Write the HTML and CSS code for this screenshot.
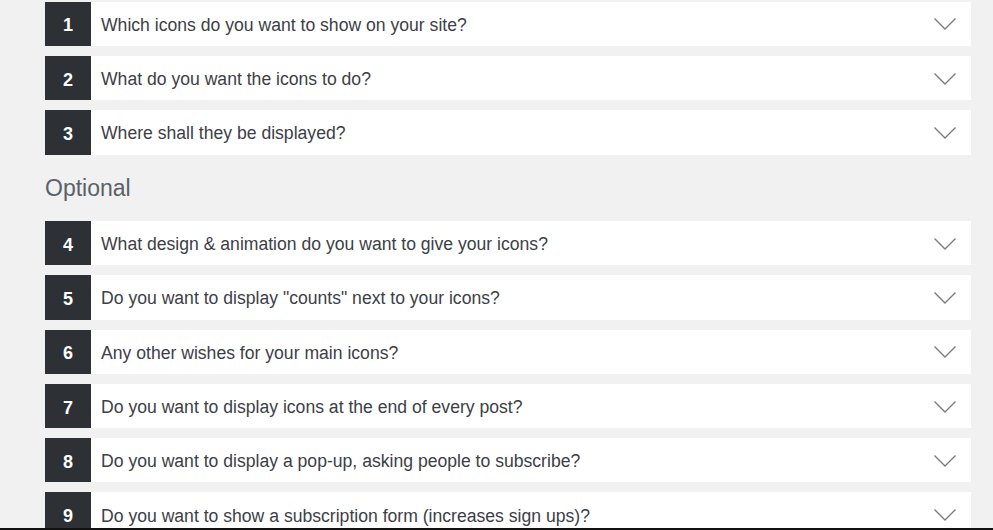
FILE: index.html
```html
<!DOCTYPE html>
<html lang="en">
<head>
<meta charset="utf-8">
<title>Icon setup</title>
<link rel="stylesheet" href="styles.css">
</head>
<body>
<div class="page">
  <div class="list">
    <div class="item"><div class="num">1</div><div class="q">Which icons do you want to show on your site?</div><svg class="chev" viewBox="0 0 22 12"><path d="M0.5 0.5 L11 11 L21.5 0.5"/></svg></div>
    <div class="item"><div class="num">2</div><div class="q">What do you want the icons to do?</div><svg class="chev" viewBox="0 0 22 12"><path d="M0.5 0.5 L11 11 L21.5 0.5"/></svg></div>
    <div class="item"><div class="num">3</div><div class="q">Where shall they be displayed?</div><svg class="chev" viewBox="0 0 22 12"><path d="M0.5 0.5 L11 11 L21.5 0.5"/></svg></div>
  </div>
  <h2 class="section">Optional</h2>
  <div class="list">
    <div class="item"><div class="num">4</div><div class="q">What design &amp; animation do you want to give your icons?</div><svg class="chev" viewBox="0 0 22 12"><path d="M0.5 0.5 L11 11 L21.5 0.5"/></svg></div>
    <div class="item"><div class="num">5</div><div class="q">Do you want to display "counts" next to your icons?</div><svg class="chev" viewBox="0 0 22 12"><path d="M0.5 0.5 L11 11 L21.5 0.5"/></svg></div>
    <div class="item"><div class="num">6</div><div class="q">Any other wishes for your main icons?</div><svg class="chev" viewBox="0 0 22 12"><path d="M0.5 0.5 L11 11 L21.5 0.5"/></svg></div>
    <div class="item"><div class="num">7</div><div class="q">Do you want to display icons at the end of every post?</div><svg class="chev" viewBox="0 0 22 12"><path d="M0.5 0.5 L11 11 L21.5 0.5"/></svg></div>
    <div class="item"><div class="num">8</div><div class="q">Do you want to display a pop-up, asking people to subscribe?</div><svg class="chev" viewBox="0 0 22 12"><path d="M0.5 0.5 L11 11 L21.5 0.5"/></svg></div>
    <div class="item"><div class="num">9</div><div class="q">Do you want to show a subscription form (increases sign ups)?</div><svg class="chev" viewBox="0 0 22 12"><path d="M0.5 0.5 L11 11 L21.5 0.5"/></svg></div>
  </div>
</div>
</body>
</html>
```
FILE: styles.css
```css
html, body {
  margin: 0;
  padding: 0;
  background: #f1f1f1;
}
body {
  font-family: "Liberation Sans", Arial, sans-serif;
}
.page {
  height: 530px;
  box-sizing: border-box;
  overflow: hidden;
  border-bottom: 2px solid #111;
  padding: 1.7px 22px 0 45px;
}
.list {
  display: flex;
  flex-direction: column;
  gap: 10px;
}
.item {
  display: flex;
  align-items: center;
  height: 44.3px;
  background: #ffffff;
}
.num {
  width: 46px;
  height: 100%;
  flex: none;
  display: flex;
  align-items: center;
  justify-content: center;
  background: #2d3136;
  color: #ffffff;
  font-weight: bold;
  font-size: 18px;
  padding-top: 4px;
  box-sizing: border-box;
}
.q {
  flex: 1;
  padding-left: 10px;
  font-size: 17.6px;
  color: #3c4046;
  padding-top: 3px;
}
.chev {
  width: 22px;
  height: 12px;
  margin-right: 15px;
  margin-top: 1px;
  flex: none;
  fill: none;
  stroke: #7a7d80;
  stroke-width: 1.4;
}
.section {
  margin: 0;
  height: 66.4px;
  box-sizing: border-box;
  padding-top: 20px;
  font-size: 23px;
  font-weight: normal;
  color: #5b6169;
}
```
